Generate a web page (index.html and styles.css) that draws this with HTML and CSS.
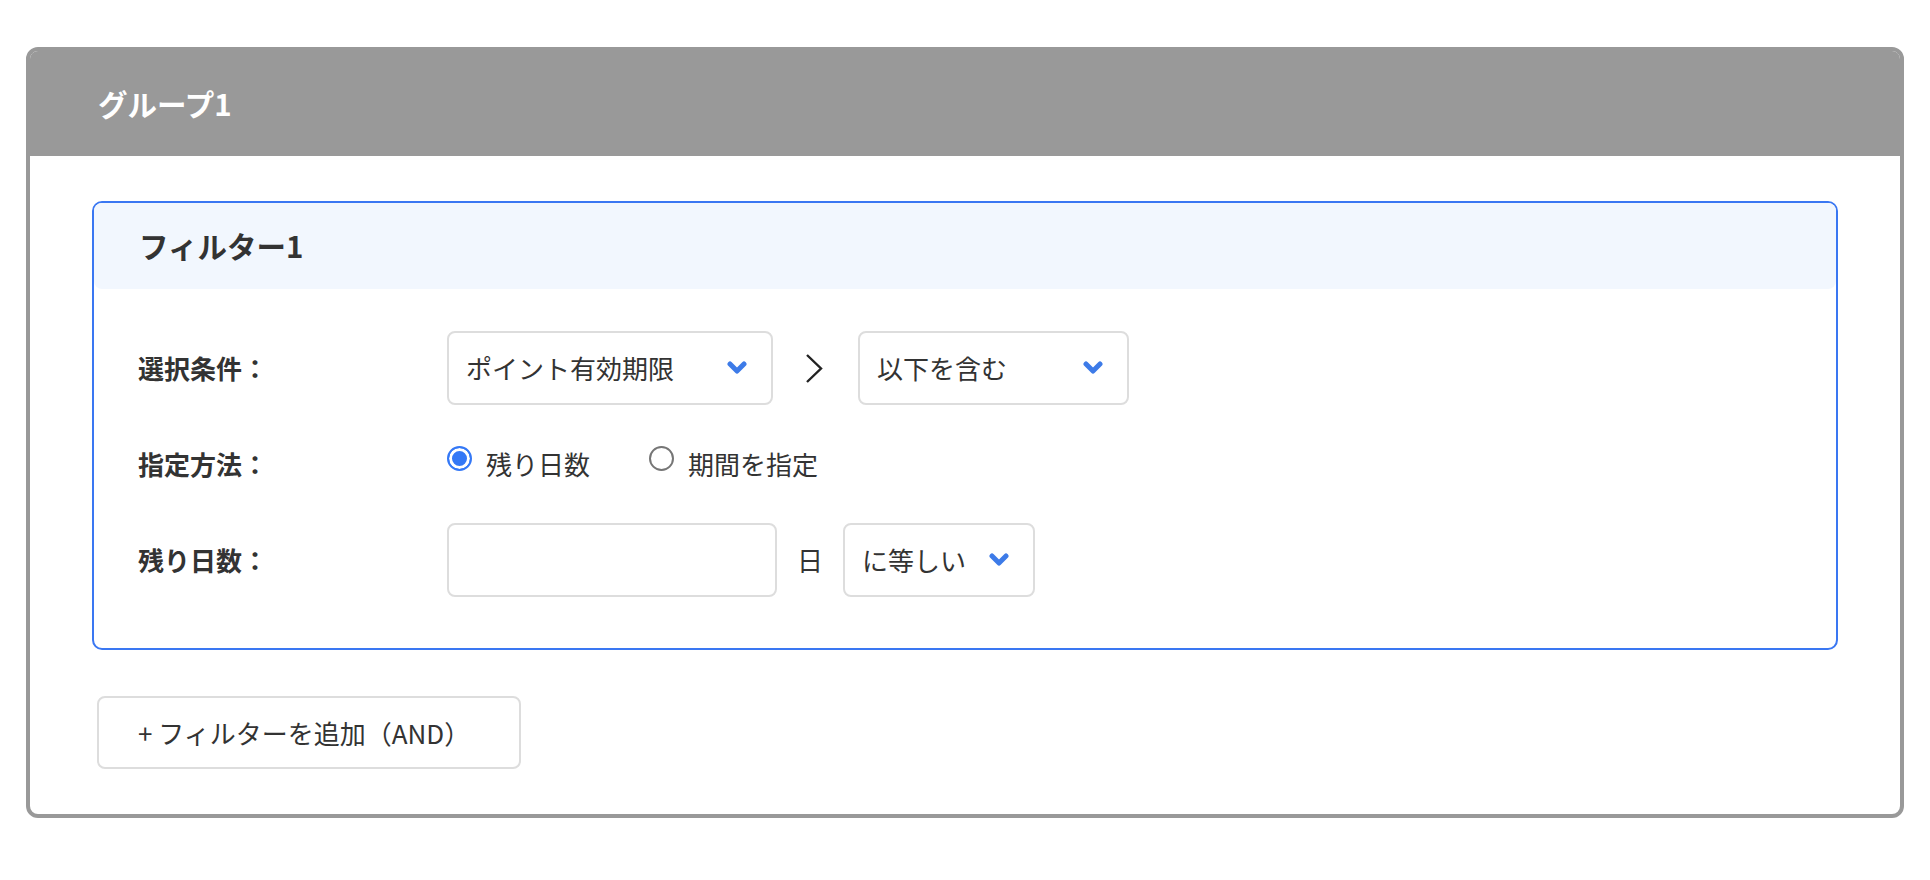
FILE: index.html
```html
<!DOCTYPE html>
<html lang="ja">
<head>
    <meta charset="UTF-8">
    <meta name="viewport" content="width=device-width, initial-scale=1.0">
    <title>グループ1</title>
    <link rel="stylesheet" href="styles.css">
</head>
<body>

<div class="group">
    <div class="group-header">グループ1</div>

    <div class="group-body">
        <div class="filter">
            <div class="filter-header">フィルター1</div>

            <div class="filter-body">
                <div class="row">
                    <div class="row-label">選択条件：</div>
                    <div class="row-controls">
                        <div class="select select-field">
                            <span>ポイント有効期限</span>
                            <svg class="chevron" viewBox="0 0 20 14" width="20" height="14"><path d="M3 3 L10 10 L17 3"/></svg>
                        </div>
                        <svg class="arrow" viewBox="0 0 18 31" width="18" height="31"><path d="M2 2 L16 15.5 L2 29"/></svg>
                        <div class="select select-op">
                            <span>以下を含む</span>
                            <svg class="chevron" viewBox="0 0 20 14" width="20" height="14"><path d="M3 3 L10 10 L17 3"/></svg>
                        </div>
                    </div>
                </div>

                <div class="row">
                    <div class="row-label">指定方法：</div>
                    <div class="row-controls">
                        <label class="radio">
                            <input type="radio" name="mode" checked>
                            <span>残り日数</span>
                        </label>
                        <label class="radio">
                            <input type="radio" name="mode">
                            <span>期間を指定</span>
                        </label>
                    </div>
                </div>

                <div class="row">
                    <div class="row-label">残り日数：</div>
                    <div class="row-controls">
                        <input type="text" class="days-input">
                        <span class="unit">日</span>
                        <div class="select select-compare">
                            <span>に等しい</span>
                            <svg class="chevron" viewBox="0 0 20 14" width="20" height="14"><path d="M3 3 L10 10 L17 3"/></svg>
                        </div>
                    </div>
                </div>
            </div>
        </div>

        <button class="add-filter">+ フィルターを追加（AND）</button>
    </div>
</div>

</body>
</html>
```

FILE: styles.css
```css
body {
    font-family: "Noto Sans CJK JP", "Noto Sans", sans-serif;
    line-height: 1.4;
    margin: 0;
    padding: 47px 26px 40px;
    background-color: #fff;
    color: #333;
}
.group {
    border: 4px solid #999;
    border-radius: 12px;
    overflow: hidden;
}
.group-header {
    background-color: #999;
    color: #fff;
    font-size: 29.5px;
    font-weight: bold;
    height: 105px;
    padding-left: 68px;
    display: flex;
    align-items: center;
    margin-top: -4px; /* header blends into the top border */
    padding-top: 4px;
}
.group-body {
    padding: 45px 62px 45px;
}
.filter {
    border: 2px solid #3a77f2;
    border-radius: 10px;
}
.filter-header {
    background-color: #f2f7fe;
    border-radius: 8px;
    height: 86px;
    padding-left: 45px;
    display: flex;
    align-items: center;
    font-size: 29.5px;
    font-weight: bold;
    color: #333;
}
.filter-body {
    padding: 42px 44px 51px;
    display: flex;
    flex-direction: column;
    gap: 22px;
}
.row {
    display: flex;
    align-items: center;
    min-height: 74px;
}
.row-label {
    width: 309px;
    flex-shrink: 0;
    font-size: 26px;
    font-weight: bold;
    color: #333;
}
.row-controls {
    display: flex;
    align-items: center;
}
.select {
    box-sizing: border-box;
    height: 74px;
    border: 2px solid #ddd;
    border-radius: 8px;
    padding: 0 24px 0 17px;
    display: flex;
    align-items: center;
    justify-content: space-between;
    font-size: 26px;
    color: #333;
    background: #fff;
}
.select-field {
    width: 326px;
}
.select-op {
    width: 271px;
}
.select-compare {
    width: 192px;
}
.chevron path {
    fill: none;
    stroke: #3d7be8;
    stroke-width: 5;
    stroke-linecap: round;
    stroke-linejoin: round;
}
.arrow {
    margin: 0 35px 0 32px;
}
.arrow path {
    fill: none;
    stroke: #222;
    stroke-width: 2.4;
}
.radio {
    display: flex;
    align-items: center;
    font-size: 26px;
    color: #333;
    margin-right: 59px;
    cursor: pointer;
}
.radio input {
    appearance: none;
    -webkit-appearance: none;
    box-sizing: border-box;
    width: 25px;
    height: 25px;
    margin: 0 14px 12px 0;
    border: 2px solid #767676;
    border-radius: 50%;
    background: #fff;
}
.radio input:checked {
    border-color: #3478f6;
    background: #3478f6;
    box-shadow: inset 0 0 0 3px #fff;
}
.days-input {
    box-sizing: border-box;
    width: 330px;
    height: 74px;
    border: 2px solid #ddd;
    border-radius: 8px;
    font-size: 26px;
    padding: 0 17px;
    outline: none;
}
.unit {
    font-size: 26px;
    color: #333;
    margin: 0 20px;
}
.add-filter {
    box-sizing: border-box;
    width: 424px;
    height: 73px;
    margin: 46px 0 0 5px;
    padding: 0 0 0 39px;
    border: 2px solid #ddd;
    border-radius: 8px;
    background: #fff;
    font-family: inherit;
    font-size: 26px;
    color: #333;
    text-align: left;
    cursor: pointer;
}
```
